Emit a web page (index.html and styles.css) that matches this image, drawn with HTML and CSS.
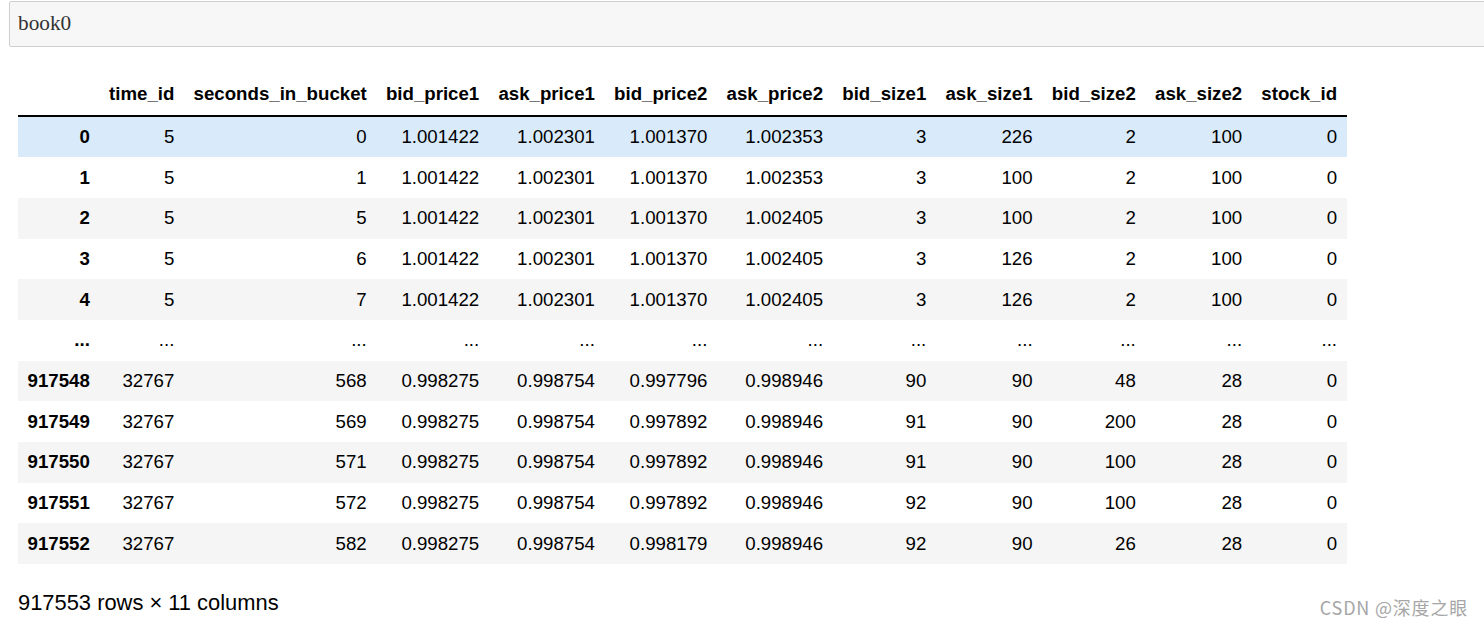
FILE: index.html
```html
<!DOCTYPE html>
<html>
<head>
<meta charset="utf-8">
<link rel="stylesheet" href="styles.css">
</head>
<body>
<div class="page">
  <div class="input-cell"><span class="code">book0</span></div>
  <div class="output">
    <table class="dataframe">
      <thead>
        <tr>
          <th></th><th>time_id</th><th>seconds_in_bucket</th><th>bid_price1</th><th>ask_price1</th><th>bid_price2</th><th>ask_price2</th><th>bid_size1</th><th>ask_size1</th><th>bid_size2</th><th>ask_size2</th><th>stock_id</th>
        </tr>
      </thead>
      <tbody>
        <tr class="hover"><th>0</th><td>5</td><td>0</td><td>1.001422</td><td>1.002301</td><td>1.001370</td><td>1.002353</td><td>3</td><td>226</td><td>2</td><td>100</td><td>0</td></tr>
        <tr><th>1</th><td>5</td><td>1</td><td>1.001422</td><td>1.002301</td><td>1.001370</td><td>1.002353</td><td>3</td><td>100</td><td>2</td><td>100</td><td>0</td></tr>
        <tr><th>2</th><td>5</td><td>5</td><td>1.001422</td><td>1.002301</td><td>1.001370</td><td>1.002405</td><td>3</td><td>100</td><td>2</td><td>100</td><td>0</td></tr>
        <tr><th>3</th><td>5</td><td>6</td><td>1.001422</td><td>1.002301</td><td>1.001370</td><td>1.002405</td><td>3</td><td>126</td><td>2</td><td>100</td><td>0</td></tr>
        <tr><th>4</th><td>5</td><td>7</td><td>1.001422</td><td>1.002301</td><td>1.001370</td><td>1.002405</td><td>3</td><td>126</td><td>2</td><td>100</td><td>0</td></tr>
        <tr><th>...</th><td>...</td><td>...</td><td>...</td><td>...</td><td>...</td><td>...</td><td>...</td><td>...</td><td>...</td><td>...</td><td>...</td></tr>
        <tr><th>917548</th><td>32767</td><td>568</td><td>0.998275</td><td>0.998754</td><td>0.997796</td><td>0.998946</td><td>90</td><td>90</td><td>48</td><td>28</td><td>0</td></tr>
        <tr><th>917549</th><td>32767</td><td>569</td><td>0.998275</td><td>0.998754</td><td>0.997892</td><td>0.998946</td><td>91</td><td>90</td><td>200</td><td>28</td><td>0</td></tr>
        <tr><th>917550</th><td>32767</td><td>571</td><td>0.998275</td><td>0.998754</td><td>0.997892</td><td>0.998946</td><td>91</td><td>90</td><td>100</td><td>28</td><td>0</td></tr>
        <tr><th>917551</th><td>32767</td><td>572</td><td>0.998275</td><td>0.998754</td><td>0.997892</td><td>0.998946</td><td>92</td><td>90</td><td>100</td><td>28</td><td>0</td></tr>
        <tr><th>917552</th><td>32767</td><td>582</td><td>0.998275</td><td>0.998754</td><td>0.998179</td><td>0.998946</td><td>92</td><td>90</td><td>26</td><td>28</td><td>0</td></tr>
      </tbody>
    </table>
    <p class="shape">917553 rows × 11 columns</p>
  </div>
  <div class="watermark">CSDN @深度之眼</div>
</div>
</body>
</html>
```

FILE: styles.css
```css
html, body {
  margin: 0;
  padding: 0;
  background: #fff;
  overflow: hidden;
}

.page {
  position: relative;
  width: 1484px;
  height: 628px;
  padding-top: 1px;
  box-sizing: border-box;
}

.input-cell {
  margin-left: 9px;
  margin-right: -12px;
  height: 44px;
  background: #f7f7f7;
  border: 1px solid #cfcfcf;
  border-radius: 2px;
  display: flex;
  align-items: center;
  padding-left: 8px;
}

.code {
  font-family: "Liberation Serif", "Times New Roman", serif;
  font-size: 21.3px;
  color: #333;
  position: relative;
  top: -1px;
}

.output {
  padding-left: 18px;
  padding-top: 27px;
}

.dataframe {
  border-collapse: collapse;
  border-spacing: 0;
  font-family: "Liberation Sans", Arial, sans-serif;
  font-size: 18.67px;
  color: #000;
}

.dataframe th,
.dataframe td {
  padding: 9.33px 9.6px;
  line-height: 22px;
  text-align: right;
  vertical-align: middle;
  white-space: nowrap;
}

.dataframe th {
  font-weight: bold;
}

.dataframe thead tr {
  border-bottom: 2px solid #000;
}

.dataframe tbody tr:nth-child(odd) {
  background: #f5f5f5;
}

.dataframe tbody tr.hover {
  background: rgb(217, 235, 251);
}

.shape {
  margin: 27px 0 0 0;
  font-family: "Liberation Sans", Arial, sans-serif;
  font-size: 21.9px;
  line-height: 24px;
  color: #000;
}

.watermark {
  position: absolute;
  right: 16px;
  bottom: 8px;
  font-family: "Noto Sans CJK SC", "Noto Sans", sans-serif;
  font-size: 18px;
  letter-spacing: 0.8px;
  color: #a6a6a6;
}
```
